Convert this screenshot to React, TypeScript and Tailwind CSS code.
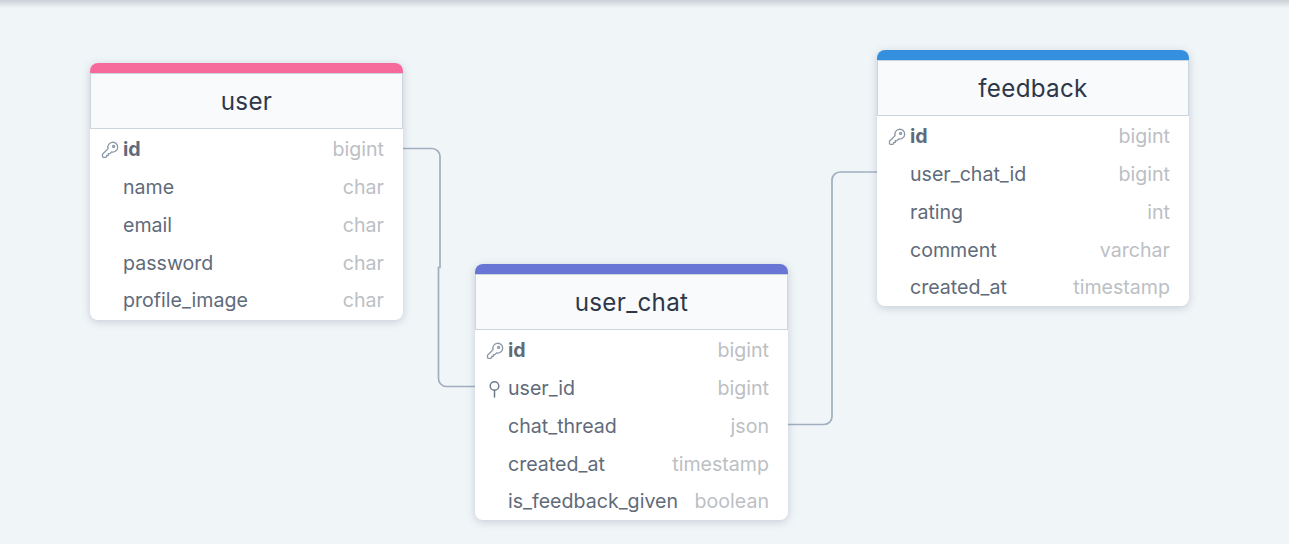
import React from 'react';

type Field = { name: string; type: string; pk?: boolean; fk?: boolean };

type TableProps = {
  title: string;
  color: string;
  fields: Field[];
  className: string;
};

const KeyIcon = () => (
  <svg width="18" height="18" viewBox="0 0 18 18" fill="none" stroke="#8a97a6" strokeWidth="1.3" strokeLinecap="round" strokeLinejoin="round">
    <path d="M7.100 7.600a4.900 4.900 0 1 1 3.500 3.300l-1.600 1.700H7.400v1.700H5.700v1.300l-.8.700H2.400a.9.900 0 0 1-.9-.9v-2.200z" />
    <circle cx="12.600" cy="5.400" r="1" />
  </svg>
);

const PinIcon = () => (
  <svg width="18" height="18" viewBox="0 0 18 18" fill="none" stroke="#6f7c8b" strokeWidth="1.5" strokeLinecap="round">
    <circle cx="8.500" cy="6" r="4.300" />
    <path d="M8.500 10.300V17" />
  </svg>
);

const Table = ({ title, color, fields, className }: TableProps) => (
  <div className={`rounded-lg bg-white shadow-[0_2px_8px_rgba(100,116,139,0.3)] overflow-hidden ${className}`}>
    <div className="h-[10px]" style={{ backgroundColor: color }} />
    <div className="h-[56px] pt-[2px] flex items-center justify-center bg-[#f8fafc] border border-[#cbd5e0] text-[24.200px] text-[#2d3748] tracking-[0.3px]">
      {title}
    </div>
    <div className="pt-[2px]">
      {fields.map((f) => (
        <div key={f.name} className="h-[37.800px] flex items-center pr-[19px]">
          <span className="w-[33px] flex justify-end pr-[4px] shrink-0">
            {f.pk && <KeyIcon />}
            {f.fk && <PinIcon />}
          </span>
          <span className={`text-[19.600px] text-[#5f6b7a] ${f.pk ? 'font-bold' : ''}`}>{f.name}</span>
          <span className="ml-auto text-[19.600px] text-[#bcc0c4]">{f.type}</span>
        </div>
      ))}
    </div>
  </div>
);

export default function App() {
  return (
    <div className="relative w-[1289px] h-[544px] overflow-hidden bg-[#f0f5f8] font-['Inter',sans-serif]">
      <div className="absolute top-0 left-0 right-0 h-[8px] bg-gradient-to-b from-[#c9cfd5] to-[#f0f5f8]" />
      <svg className="absolute inset-0" width="1289" height="544" fill="none" stroke="#a0aec0" strokeWidth="1.700">
        <path d="M403 148.500H432a8 8 0 0 1 8 8V267.500h-1.500V378a8 8 0 0 0 8 8.500H476" />
        <path d="M788 424.500H824a8 8 0 0 0 8-8V180a8 8 0 0 1 8-8H877" />
      </svg>
      <div className="absolute left-[90px] top-[63px]">
        <Table
          title="user"
          color="#f6699b"
          className="w-[313px] h-[257px]"
          fields={[
            { name: 'id', type: 'bigint', pk: true },
            { name: 'name', type: 'char' },
            { name: 'email', type: 'char' },
            { name: 'password', type: 'char' },
            { name: 'profile_image', type: 'char' },
          ]}
        />
      </div>
      <div className="absolute left-[475px] top-[264px]">
        <Table
          title="user_chat"
          color="#6875d4"
          className="w-[313px] h-[256px]"
          fields={[
            { name: 'id', type: 'bigint', pk: true },
            { name: 'user_id', type: 'bigint', fk: true },
            { name: 'chat_thread', type: 'json' },
            { name: 'created_at', type: 'timestamp' },
            { name: 'is_feedback_given', type: 'boolean' },
          ]}
        />
      </div>
      <div className="absolute left-[877px] top-[50px]">
        <Table
          title="feedback"
          color="#3490de"
          className="w-[312px] h-[256px]"
          fields={[
            { name: 'id', type: 'bigint', pk: true },
            { name: 'user_chat_id', type: 'bigint' },
            { name: 'rating', type: 'int' },
            { name: 'comment', type: 'varchar' },
            { name: 'created_at', type: 'timestamp' },
          ]}
        />
      </div>
    </div>
  );
}
